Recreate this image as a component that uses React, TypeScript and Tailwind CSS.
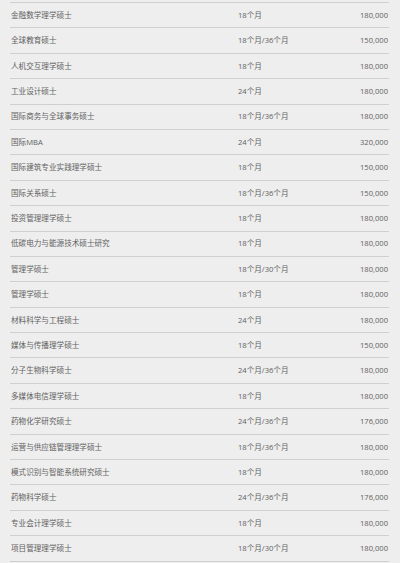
import React from "react";

const rows: [string, string, string][] = [
  ["金融数学理学硕士", "18个月", "180,000"],
  ["全球教育硕士", "18个月/36个月", "150,000"],
  ["人机交互理学硕士", "18个月", "180,000"],
  ["工业设计硕士", "24个月", "180,000"],
  ["国际商务与全球事务硕士", "18个月/36个月", "180,000"],
  ["国际MBA", "24个月", "320,000"],
  ["国际建筑专业实践理学硕士", "18个月", "150,000"],
  ["国际关系硕士", "18个月/36个月", "150,000"],
  ["投资管理理学硕士", "18个月", "180,000"],
  ["低碳电力与能源技术硕士研究", "18个月", "180,000"],
  ["管理学硕士", "18个月/30个月", "180,000"],
  ["管理学硕士", "18个月", "180,000"],
  ["材料科学与工程硕士", "24个月", "180,000"],
  ["媒体与传播理学硕士", "18个月", "150,000"],
  ["分子生物科学硕士", "24个月/36个月", "180,000"],
  ["多媒体电信理学硕士", "18个月", "180,000"],
  ["药物化学研究硕士", "24个月/36个月", "176,000"],
  ["运营与供应链管理理学硕士", "18个月/36个月", "180,000"],
  ["模式识别与智能系统研究硕士", "18个月", "180,000"],
  ["药物科学硕士", "24个月/36个月", "176,000"],
  ["专业会计理学硕士", "18个月", "180,000"],
  ["项目管理理学硕士", "18个月/30个月", "180,000"],
];

export default function App() {
  return (
    <div
      className="w-[400px] h-[563px] overflow-hidden bg-[#eeeeee] px-[10px] pt-[2px] text-[#626262] text-[7.6px]"
      style={{ fontFamily: '"Open Sans", "Noto Sans CJK SC", sans-serif' }}
    >
      <div className="w-[379px] border-b border-[#cfcfcf]">
        {rows.map(([name, dur, fee], i) => (
          <div
            key={i}
            className="grid grid-cols-[228px_1fr_auto] items-center h-[25.4px] border-t border-[#cfcfcf] pt-[1px]"
          >
            <span className="pl-[1px] leading-none">{name}</span>
            <span className="leading-none">{dur}</span>
            <span className="pr-[1px] leading-none text-right">{fee}</span>
          </div>
        ))}
      </div>
    </div>
  );
}
